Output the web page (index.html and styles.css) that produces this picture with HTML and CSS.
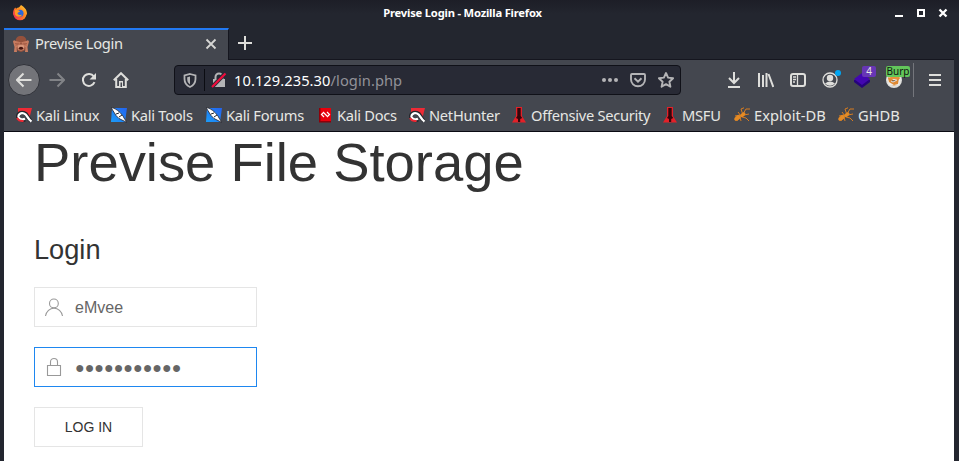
FILE: index.html
```html
<!DOCTYPE html>
<html lang="en">
<head>
<meta charset="utf-8">
<title>Previse Login</title>
<link rel="stylesheet" href="styles.css">
</head>
<body>
<svg width="0" height="0" class="defs">
  <defs>
    <linearGradient id="fire" x1="1" y1="0" x2="0" y2="1"><stop offset="0" stop-color="#ffdc3e"/><stop offset=".45" stop-color="#ff8a1e"/><stop offset="1" stop-color="#f0245e"/></linearGradient>
    <linearGradient id="sky" x1="0" y1="1" x2="1" y2="0"><stop offset="0" stop-color="#1b9cf8"/><stop offset="1" stop-color="#2463ee"/></linearGradient>
    <symbol id="magnet" viewBox="0 0 16 16"><path fill="#ee2a35" d="M2 1h14l-2.500 9.500-3-4L7 4 2 6z"/><path fill="none" stroke="#26272d" stroke-width="4" d="M15 14C11 11 12 7 8 6C4 5.200 1.500 7 2 10c.5 2.500 4 4 7 2.500"/><path fill="none" stroke="#fff" stroke-width="2.300" d="M15.500 14.500C11 11.500 11.500 7.500 8 6.500C4.500 5.500 2 7.500 2.600 10c.6 2 3.400 3 6.400 1.800"/><path fill="none" stroke="#ee2a35" stroke-width="2" d="M1 11q2 3.500 6.500 3"/></symbol>
    <symbol id="knife" viewBox="0 0 16 16"><path fill="url(#sky)" d="M1 1h15l-2 14H0z"/><path fill="#fff" stroke="#23252c" stroke-width=".8" d="M0 .5C3 1 6 2.500 9 5.500l3 3.500 1 2 3 4.500-5-2.500-3-1.500-3-3z"/><path stroke="#23252c" fill="none" d="M5 7l3-1M8 10l3-2"/></symbol>
    <symbol id="bug" viewBox="0 0 16 16"><g fill="none" stroke="#d77c20" stroke-width="1"><path d="M7 9L4 5M9 8L7 2 10 .8M9 7l3-5h4M10 8l5-1M8 10l4 1 3 3M6 10l1 4M4 11l-1 3M6 8L1 9"/></g><ellipse cx="3.500" cy="11" rx="3.600" ry="2.200" fill="#e58a24" transform="rotate(-35 3.500 11)"/><ellipse cx="8.800" cy="7.700" rx="3" ry="1.900" fill="#e58a24" transform="rotate(-35 8.800 7.700)"/></symbol>
    <symbol id="pin" viewBox="0 0 16 16"><path fill="#e32028" d="M5 0h6v9l4 6.500H1L5 9z"/><path fill="#34060b" d="M6.300 1h3.400v8l1.500 2-2 1v3H7v-3l-2-1 1.300-2z"/></symbol>
  </defs>
</svg>
<div class="window">
  <header class="titlebar">
    <svg class="fox" viewBox="0 0 16 16"><circle cx="8" cy="8.800" r="6.500" fill="url(#fire)"/><path fill="url(#fire)" d="M1 9c0-3 .8-5 2.200-6.500L5 5l4-5c3 2 6 4 6 9l-4 4-8 0z"/><circle cx="8" cy="8.300" r="3.500" fill="#2a67dd"/><path fill="#ff9a22" d="M3 5c3 0 4 .4 5 1.500C7 7.500 6 7 5.500 8.500 6 10 8 10.500 10 9.500c-1 3-5 3-7 0z"/></svg>
    <span class="window-title">Previse Login - Mozilla Firefox</span>
    <svg class="controls" viewBox="0 0 56 12" shape-rendering="crispEdges"><path fill="#fff" d="M0 8h8v2H0z"/><path fill="none" stroke="#fff" stroke-width="2" d="M23 3h6v6h-6z"/><path shape-rendering="auto" stroke="#fff" stroke-width="2.300" d="M44.500 2.500l7 7m0-7l-7 7"/></svg>
  </header>
  <div class="tabs">
    <div class="tab">
      <svg class="monkey" viewBox="0 0 16 16"><path fill="#94513c" d="M8 0c3.500 0 5.500 2 5.500 5.500L13 13q-2 3-5 3t-5-3L2.500 5.500C2.500 2 4.500 0 8 0z"/><path fill="#c87c60" d="M0 5.500q1-2 2.500-.5L7.800 6.300 6 9.500l-2.500 2L4 16H1l.5-5zM16 5.500q-1-2-2.500-.5L8.200 6.300 10 9.500l2.500 2L12 16h3l-.5-5z"/><path stroke="#98523e" stroke-width=".7" fill="none" d="M2 7.500l4.500-.3M2.500 9L5.500 8.500M14 7.500l-4.500-.3M13.500 9l-3-.5"/><ellipse cx="8" cy="11.600" rx="3.400" ry="3" fill="#d9977c"/><ellipse cx="8" cy="12.300" rx="2.200" ry="1.500" fill="#46150f"/></svg>
      <span class="tab-title">Previse Login</span>
      <svg class="tab-close" viewBox="0 0 12 12"><path stroke="#d6d6d4" stroke-width="1.800" d="M1.500 1.500l9 9m0-9l-9 9"/></svg>
    </div>
    <svg class="newtab" viewBox="0 0 14 14"><path stroke="#dededb" stroke-width="2" d="M7 0v14M0 7h14"/></svg>
  </div>
  <div class="nav">
    <span class="cell back"><svg viewBox="0 0 16 16"><path class="line" d="M15.500 8H1.500M7.500 1.500L1 8l6.500 6.500"/></svg></span>
    <span class="cell forward"><svg viewBox="0 0 16 16"><path class="line" d="M.5 8h14M8.500 1.500L15 8l-6.500 6.500"/></svg></span>
    <span class="cell"><svg viewBox="0 0 16 16"><path class="line" d="M13.500 10.200A6 6 0 1 1 12.800 4.400"/><path class="solid" d="M15 1v6.500H8.500z"/></svg></span>
    <span class="cell"><svg viewBox="0 0 16 16"><path class="line" d="M.8 8.300L8 1.200l7.200 7.100M3.200 7v8h9.600V7"/><path class="solid" d="M6 9h4v6H6z"/><path fill="#44474f" d="M7.500 10.500H9V15H7.500z"/></svg></span>
    <div class="urlbar">
      <svg class="shield" viewBox="0 0 14 15"><path fill="none" stroke="#b4b4b6" stroke-width="1.800" d="M7 1l5.500 1.500V6c0 4-2.200 6.500-5.500 8C3.700 12.500 1.500 10 1.500 6V2.500z"/><path fill="#b4b4b6" d="M7 3.500v8C5 10 4.200 8.500 4.200 6V4.200z"/></svg>
      <i class="divider"></i>
      <svg class="lock" viewBox="0 0 16 16"><path fill="none" stroke="#b4b4b6" stroke-width="2" d="M4.500 8V5a3.500 3.500 0 0 1 7 0v3"/><path fill="#b4b4b6" d="M2 7h12v8H2z"/><path stroke="#282a35" stroke-width="4" d="M.5 15.500L14.500 1"/><path stroke="#f20b3c" stroke-width="2.100" d="M1 15L14.500 1.500"/></svg>
      <span class="url">10.129.235.30<span class="path">/login.php</span></span>
      <svg class="dots" viewBox="0 0 16 16" fill="#b4b4b6"><circle cx="2" cy="8" r="2"/><circle cx="8" cy="8" r="2"/><circle cx="14" cy="8" r="2"/></svg>
      <svg class="pocket" viewBox="0 0 16 16"><path class="gray" d="M2 2h12q1 0 1 1v4.500a7 6.800 0 0 1-14 0V3q0-1 1-1zM4.500 6.300L8 9.700l3.500-3.400"/></svg>
      <svg class="star" viewBox="0 0 16 16"><path class="gray" stroke-linejoin="round" d="M8 1l2.100 4.600 5 .6-3.700 3.500 1 5L8 12.200l-4.400 2.500 1-5L.9 6.200l5-.6z"/></svg>
    </div>
    <span class="cell"><svg viewBox="0 0 16 16"><path class="line" d="M8 0v11M3 6l5 5 5-5M2 15h12"/></svg></span>
    <span class="cell"><svg viewBox="0 0 16 16"><path class="line" d="M1 1v14M5 3v12M8.500 1v14M10.500 2l4.800 13"/></svg></span>
    <span class="cell"><svg viewBox="0 0 16 16"><rect class="line" x="1" y="2" width="14" height="12" rx="2"/><path class="line thin" d="M7.500 2v12M3 5h3M3 7.500h3M3 10h2"/></svg></span>
    <span class="cell account"><svg viewBox="0 0 16 16"><circle class="line thin" cx="8" cy="8" r="7"/><circle class="solid" cx="8" cy="6" r="3.200"/><path class="solid" d="M3 11.500Q8 7.500 13 11.500Q8 16 3 11.500z"/></svg><i class="dot"></i></span>
    <span class="cell"><svg viewBox="0 0 16 16"><path fill="#26037c" d="M0 10l8 6 8-6V8H0z"/><path fill="#4307b0" d="M8 1l8 6-8 6-8-6z"/></svg><b class="badge count">4</b></span>
    <span class="cell"><svg viewBox="0 0 16 16"><circle cx="8" cy="8" r="8" fill="#dfdfdc"/><circle cx="8" cy="7.500" r="6" fill="#e99139"/><path fill="#ededeb" d="M1 6l3 2 4-1 4 1 3-2-2 7H3z"/><path fill="#de8934" d="M2 6l4 1 2 2 5-3-1 6-4 1-5-3z"/><path stroke="#eee" d="M5 9l2 1 4-2M3 5l4-1"/></svg><b class="badge burp">Burp</b></span>
    <i class="separator"></i>
    <svg class="menu" viewBox="0 0 12 12"><path stroke="#dededb" stroke-width="2" d="M0 1h12M0 6h12M0 11h12"/></svg>
  </div>
  <nav class="bookmarks">
    <span><svg><use href="#magnet"/></svg><em>Kali Linux</em></span>
    <span><svg><use href="#knife"/></svg><em>Kali Tools</em></span>
    <span><svg><use href="#knife"/></svg><em>Kali Forums</em></span>
    <span><svg viewBox="0 0 16 16"><path fill="#e8000c" d="M2 1h12v13H2z"/><path fill="#8e0009" d="M2 1h1.500v14H2zM2 14h12v1.500H2z"/><path fill="none" stroke="#fff" stroke-width="1.200" d="M7 5L4.500 7.500 7 10M10 5l2.500 2.500L10 10M7 6l3 3"/></svg><em>Kali Docs</em></span>
    <span><svg><use href="#magnet"/></svg><em>NetHunter</em></span>
    <span><svg><use href="#pin"/></svg><em>Offensive Security</em></span>
    <span><svg><use href="#pin"/></svg><em>MSFU</em></span>
    <span><svg><use href="#bug"/></svg><em class="wide">Exploit-DB</em></span>
    <span><svg><use href="#bug"/></svg><em class="wide">GHDB</em></span>
  </nav>
  <main class="page">
    <h1>Previse File Storage</h1>
    <h2>Login</h2>
    <div class="field"><svg viewBox="0 0 20 20"><circle cx="9.900" cy="6.400" r="4.400"/><path d="M1.500 19C2.300 14.500 5.800 11.200 10 11.200s7.700 3.300 8.500 7.800"/></svg><span>eMvee</span></div>
    <div class="field focused"><svg viewBox="0 0 20 20"><path d="M3.500 8.500h13v10h-13zM6.500 8V4.900C6.500 3 8.100 1.500 10 1.500s3.500 1.500 3.500 3.400V8"/></svg><span>●●●●●●●●●●●</span></div>
    <button class="submit">LOG IN</button>
  </main>
</div>
</body>
</html>
```
FILE: styles.css
```css
* { box-sizing: border-box; }
body { margin: 0; height: 461px; overflow: hidden; background: #23262f; }
svg { display: block; flex: none; }
.defs { position: absolute; }
.window { height: 461px; padding: 0 5px 0 4px; background: #23262f; font-family: "Noto Sans", sans-serif; font-size: 14.667px; color: #e7e7e4; }
.titlebar { height: 28px; display: flex; align-items: center; margin: 0 -5px 0 -4px; padding: 0 11px 2px 12px; background: linear-gradient(#1d1e27, #23262f 14px); }
.fox { width: 16px; height: 16px; }
.window-title { flex: 1; padding: 0 0 2px 2px; text-align: center; font-size: 11.2px; font-weight: 700; letter-spacing: -.19px; color: #fff; }
.controls { width: 56px; height: 12px; margin-right: -3px; }
.tabs { height: 32px; display: flex; border-bottom: 1px solid #15161f; }
.tab { width: 225px; height: 32px; display: flex; align-items: center; padding: 0 11px 1px 9px; background: #44474f; border-top: 2px solid #2279f2; border-right: 1px solid #15161f; }
.monkey { width: 16px; height: 16px; margin-bottom: 1px; }
.tab-title { flex: 1; margin: 0 0 3px 6px; letter-spacing: -.27px; white-space: nowrap; }
.tab-close { width: 12px; height: 12px; margin-bottom: 1px; }
.newtab { width: 14px; height: 14px; margin: 8px 0 0 9px; }
.nav { height: 40px; display: flex; align-items: center; padding: 0 13px 0 4px; background: #44474f; }
.cell { position: relative; width: 32px; height: 32px; flex: none; display: flex; align-items: center; justify-content: center; }
.cell svg { width: 16px; height: 16px; }
.line { fill: none; stroke: #dededb; stroke-width: 2; }
.thin { stroke-width: 1.3; }
.solid { fill: #dededb; }
.gray { fill: none; stroke: #b4b4b6; stroke-width: 1.9; }
.back { background: #737479; border: 1px solid #303239; border-radius: 50%; margin-right: 1px; }
.forward { opacity: .4; }
.urlbar { flex: 1; height: 30px; margin: 0 37px; display: flex; align-items: center; background: #282a35; border: 1px solid #101118; border-radius: 4px; padding: 0 6px 0 8px; }
.shield { width: 14px; height: 15px; }
.divider { width: 1px; height: 22px; background: #0b0c12; margin: 0 6px 0 7px; }
.lock { width: 16px; height: 16px; }
.url { flex: 1; margin-left: 7px; letter-spacing: .07px; color: #fff; white-space: nowrap; }
.path { color: #929299; }
.dots, .pocket, .star { width: 16px; height: 16px; margin-left: 12px; }
.dot { position: absolute; right: 5px; top: 6px; width: 6px; height: 6px; border-radius: 50%; background: #00a5f2; }
.badge { position: absolute; border-radius: 2px; text-align: center; font-weight: 400; }
.count { left: 16px; top: 2px; width: 14px; height: 11px; font-size: 10px; line-height: 11px; background: #6736b5; }
.burp { left: 8px; top: 2px; width: 24px; height: 11px; font-size: 10px; line-height: 11px; color: #101510; background: #63c65b; }
.separator { width: 1px; height: 34px; margin: 0 15px 0 3px; background: #74767c; }
.menu { width: 12px; height: 12px; }
.bookmarks { height: 32px; padding-left: 12px; background: #44474f; border-bottom: 1px solid #090a12; display: grid; grid-template-columns: 95px 95px 111px 92px 102px 151px 72px 104px 80px; }
.bookmarks span { display: flex; align-items: center; padding-bottom: 1px; white-space: nowrap; }
.bookmarks svg { width: 16px; height: 16px; margin-right: 4px; }
.bookmarks em { font-style: normal; letter-spacing: -.27px; padding-bottom: 1px; }
.bookmarks .wide { letter-spacing: .03px; }
.page { height: 329px; padding: 1px 30px; background: #fff; font-family: "Liberation Sans", sans-serif; }
h1, h2 { margin: 0; font-weight: 400; color: #333; }
h1 { font-size: 54.4px; line-height: 60px; }
h2 { margin-top: 39px; font-size: 27.2px; line-height: 35px; }
.field { width: 223px; height: 40px; margin-top: 20px; padding-left: 9px; display: flex; align-items: center; border: 1px solid #e5e5e5; font-size: 16px; color: #666; }
.field svg { width: 20px; height: 20px; fill: none; stroke: #999; stroke-width: 1.1; }
.field span { margin-left: 11px; padding-top: 2px; }
.focused { border-color: #1e87f0; }
.submit { display: block; width: 109px; height: 40px; margin-top: 20px; padding: 0; border: 1px solid #e5e5e5; background: #fff; color: #333; font: 14px/38px "Liberation Sans", sans-serif; }
```
